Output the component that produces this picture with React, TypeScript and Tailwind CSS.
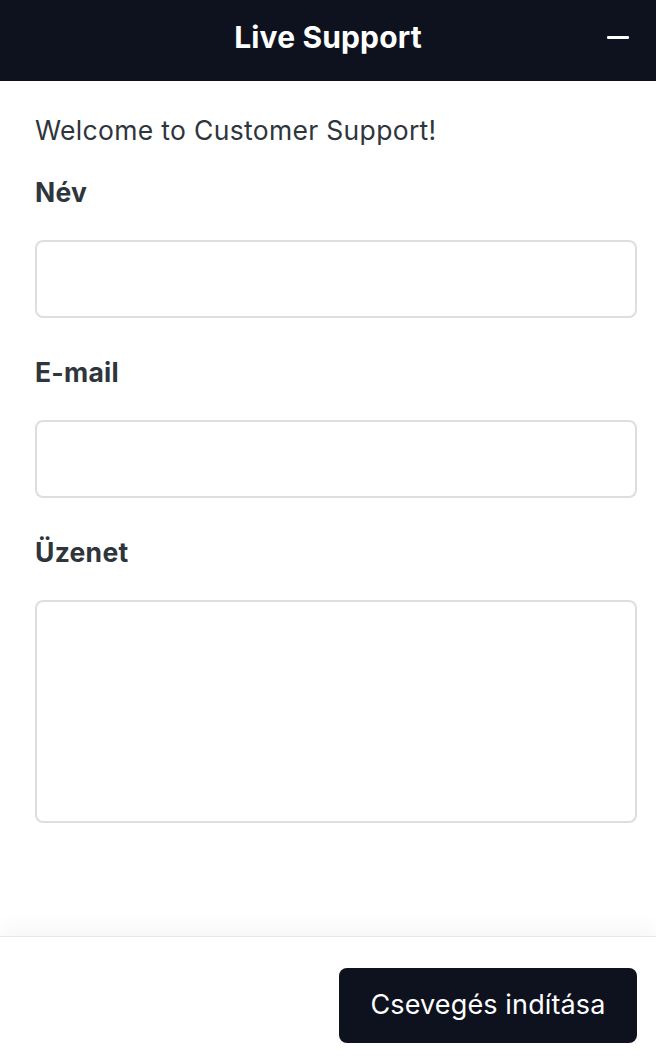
import { Minus } from 'lucide-react';

const fields = [
  { label: 'Név', type: 'input' },
  { label: 'E-mail', type: 'input' },
  { label: 'Üzenet', type: 'textarea' },
] as const;

const App = () => {
  return (
    <div className="h-screen flex flex-col bg-white font-['Inter',sans-serif]">
      {/* Header */}
      <div className="h-[81px] shrink-0 bg-[#0e121e] flex items-center justify-center relative pb-[7px]">
        <h1 className="text-white text-[30px] leading-[36px] font-bold tracking-[0.005em]">Live Support</h1>
        <button className="absolute right-[27px] top-[36px] w-[22px] h-[3px] bg-white rounded-[1px]" aria-label="minimize" />
      </div>

      {/* Form */}
      <div className="flex-1 pt-[31px] pl-[35px] pr-[19px]">
        <p className="text-[26.5px] leading-[36px] text-[#2f353c] tracking-[0.012em]">Welcome to Customer Support!</p>
        <div className="mt-[26px] flex flex-col gap-[36px]">
          {fields.map((f) => (
            <div key={f.label} className="flex flex-col gap-[30px]">
              <label className="text-[26.5px] leading-[36px] font-bold text-[#2f353c] tracking-[0.01em]">{f.label}</label>
              {f.type === 'input' ? (
                <input className="h-[78px] w-full rounded-[8px] border-2 border-[#dcdee1] px-4 text-[24px] outline-none" />
              ) : (
                <textarea className="h-[223px] w-full resize-none rounded-[8px] border-2 border-[#dcdee1] px-4 py-3 text-[24px] outline-none" />
              )}
            </div>
          ))}
        </div>
      </div>

      {/* Footer */}
      <div className="shrink-0 border-t border-[#e6e6e6] shadow-[0_-10px_20px_rgba(0,0,0,0.035)] pt-[31px] pb-[21px] pl-[35px] pr-[19px] flex justify-end">
        <button className="h-[75px] w-[298px] rounded-[8px] bg-[#0e121e] text-white text-[27px] tracking-[0.005em]">Csevegés indítása</button>
      </div>
    </div>
  );
};

export default App;
